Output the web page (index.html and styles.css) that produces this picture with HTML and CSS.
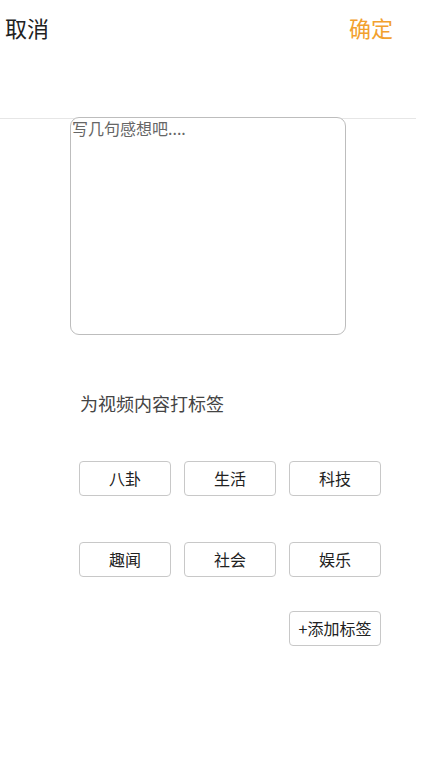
FILE: index.html
```html
<!DOCTYPE html>
<html lang="zh-CN">
<head>
<meta charset="utf-8">
<title>发布</title>
<link rel="stylesheet" href="styles.css">
</head>
<body>
<div class="page">
  <header class="topbar">
    <span class="cancel">取消</span>
    <span class="confirm">确定</span>
  </header>
  <div class="divider"></div>
  <textarea class="note" placeholder="写几句感想吧...."></textarea>
  <section class="tags">
    <h2 class="tags-title">为视频内容打标签</h2>
    <div class="tag-grid">
      <button class="tag">八卦</button>
      <button class="tag">生活</button>
      <button class="tag">科技</button>
      <button class="tag">趣闻</button>
      <button class="tag">社会</button>
      <button class="tag">娱乐</button>
    </div>
    <div class="add-row">
      <button class="tag">+添加标签</button>
    </div>
  </section>
</div>
</body>
</html>
```
FILE: styles.css
```css
* { box-sizing: border-box; }
html, body { margin: 0; padding: 0; background: #fff; }
body {
  font-family: "Noto Sans CJK SC", "Noto Sans", sans-serif;
  color: #222;
  width: 434px;
}
.topbar {
  height: 54px;
  display: flex;
  align-items: center;
  justify-content: space-between;
  padding: 0 41px 0 5px;
  font-size: 22px;
  line-height: 1;
}
.cancel { color: #222; }
.confirm { color: #f2a12e; }
.divider {
  margin-top: 64px;
  width: 416px;
  height: 1px;
  background: #e6e6e6;
}
.note {
  display: block;
  margin: -2px 0 0 70px;
  width: 276px;
  height: 218px;
  border: 1px solid #bdbdbd;
  border-radius: 9px;
  padding: 0 1px;
  font-family: inherit;
  font-size: 16px;
  line-height: 20px;
  resize: none;
  outline: none;
  background: #fff;
}
.note::placeholder { color: #666; }
.tags { padding-left: 79px; width: 381px; }
.tags-title {
  margin: 56px 0 0 1px;
  font-size: 18px;
  font-weight: normal;
  line-height: 24px;
  color: #444;
}
.tag-grid {
  margin-top: 46px;
  display: grid;
  grid-template-columns: 92px 92px 92px;
  column-gap: 13px;
  row-gap: 46px;
}
.tag {
  height: 35px;
  width: 92px;
  display: flex;
  align-items: center;
  justify-content: center;
  border: 1px solid #c8c8c8;
  border-radius: 4px;
  background: #fff;
  font-family: inherit;
  font-size: 16px;
  color: #222;
  padding: 0 0 2px;
  line-height: 1;
}
.add-row {
  margin-top: 34px;
  display: flex;
  justify-content: flex-end;
}
```
